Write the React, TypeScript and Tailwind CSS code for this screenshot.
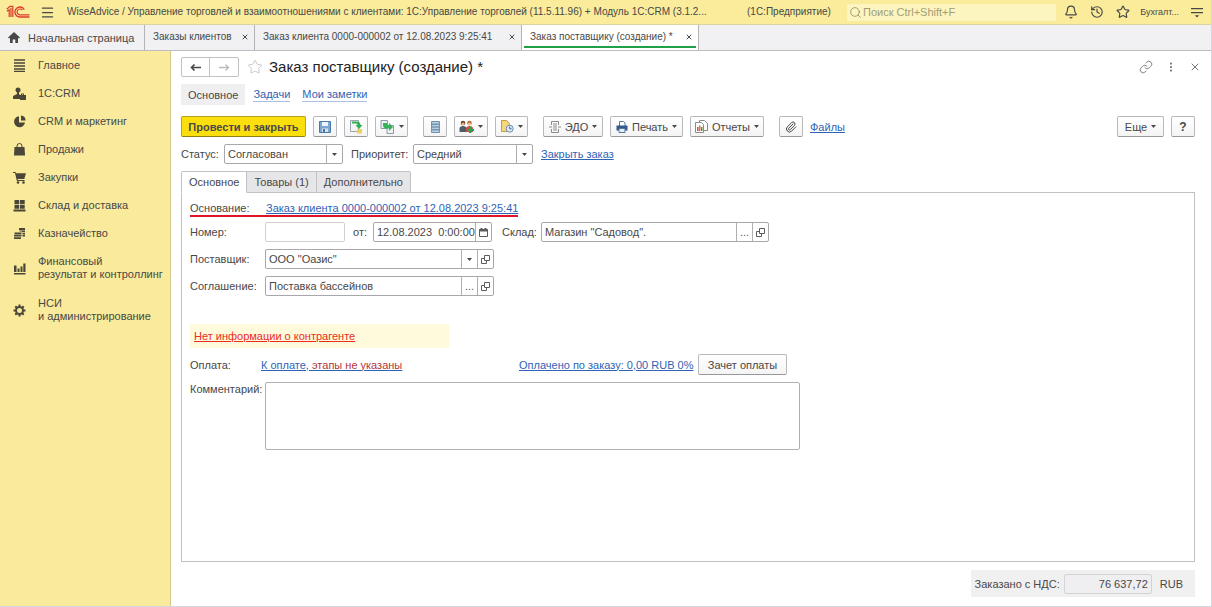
import { useState, type ReactNode } from 'react'
import { clsx } from 'clsx'
import { Bell, History, Link, Menu, MoreVertical, Paperclip, Search, Star, X } from 'lucide-react'

type SectionItem = {
    label: string[]
    icon: ReactNode
}

const sections: SectionItem[] = [
    {
        label: ['Главное'],
        icon: <path d="M1 1h11M1 4h11M1 7h11M1 10h11M1 12.5h11" stroke="currentColor" strokeWidth="1.6" fill="none" />,
    },
    {
        label: ['1С:CRM'],
        icon: (
            <>
                <circle cx="5" cy="3" r="2.5" />
                <path d="M4 5h2v2l1 1v4H0V9l4-2z" />
                <path d="M8 8h5v5H7V8h1V6.5h3V8h-1v-.7H9V8z" />
            </>
        ),
    },
    {
        label: ['CRM и маркетинг'],
        icon: <path d="M6 1.2a5.5 5.5 0 1 0 6 6.3H6zM8 .5V5.6h4.6A5.3 5.3 0 0 0 8 .5z" />,
    },
    {
        label: ['Продажи'],
        icon: (
            <>
                <path d="M1.5 4h10l.5 8.5H1z" />
                <path d="M4 5V3a2.5 2.5 0 0 1 5 0V5" fill="none" stroke="currentColor" />
            </>
        ),
    },
    {
        label: ['Закупки'],
        icon: (
            <>
                <path d="M0 1h2.5l.5 1.3h10L11.3 8H4.6l.2 1h6.7v1H3.9L2 2H0z" />
                <circle cx="5" cy="11.5" r="1.3" />
                <circle cx="10.5" cy="11.5" r="1.3" />
            </>
        ),
    },
    {
        label: ['Склад и доставка'],
        icon: <path d="M1.5 1h4.7v4H1.5zM7 1h4.7v4H7zM1.5 5.7h4.7v4H1.5zM7 5.7h4.7v4H7zM.5 10.5h12v2H.5z" />,
    },
    {
        label: ['Казначейство'],
        icon: (
            <>
                <path d="M6 1h6v2H6zM6.5 3.5H12v1.800H9V4.5H6.5zM9.5 6H12v1.5H9.5zM9.5 8H12v1.5h-2.5z" />
                <path d="M1.5 5.5H8.5v2H1.5zM1 8h7.5v1.6H1zM1 10.2h7v1.8H1z" />
            </>
        ),
    },
    {
        label: ['Финансовый', 'результат и контроллинг'],
        icon: <path d="M1 3.500h2.500v6.500H1zM4.500 6.500h2v3.500h-2zM7.500 4.500h2V10h-2zM10.300 1.500h2.200V10h-2.200zM1 11h11.500v1.500H1z" />,
    },
    {
        label: ['НСИ', 'и администрирование'],
        icon: (
            <>
                <circle cx="6.5" cy="6.5" r="3.5" fill="none" stroke="currentColor" strokeWidth="2" />
                <path
                    d="M6.5 0.5v2M6.5 10.5v2M.5 6.5h2M10.5 6.5h2M2.3 2.3l1.4 1.4M9.3 9.3l1.4 1.4M2.3 10.7l1.4-1.4M9.3 3.7l1.4-1.4"
                    stroke="currentColor"
                    strokeWidth="2"
                />
            </>
        ),
    },
]

const windows = [
    { title: 'Заказы клиентов', width: 'w-[110px]' },
    { title: 'Заказ клиента 0000-000002 от 12.08.2023 9:25:41', width: 'w-[267px]' },
    { title: 'Заказ поставщику (создание) *', width: 'w-[177px]', active: true },
]

const formTabs = ['Основное', 'Товары (1)', 'Дополнительно']

function Logo() {
    return (
        <svg viewBox="0 0 24 14" className="w-6 h-3.5 shrink-0 text-[#dc3a2c]" fill="none" stroke="currentColor" aria-label="1С">
            <path d="M.7 4.2 4 1.3h2.8V12M.9 6.3l2.3-1.5V12M5 3v9" strokeWidth="1.2" />
            <path d="M18.3 4.6A5 5 0 1 0 13.7 12H23.5" strokeWidth="1.3" />
            <path d="M16.3 5.2A2.9 2.9 0 1 0 13.7 9.8H23.5" strokeWidth="1.2" />
        </svg>
    )
}

function Caret() {
    return (
        <svg viewBox="0 0 5 3" className="w-[5px] h-[3px] shrink-0" fill="currentColor">
            <path d="M0 0h5L2.5 3z" />
        </svg>
    )
}

function OpenIcon() {
    return (
        <svg viewBox="0 0 9 9" className="w-[9px] h-[9px]" fill="none" stroke="currentColor">
            <path d="M3.5.5h5v5h-5zM3.5 3.5h-3v5h5v-3" />
        </svg>
    )
}

function ToolButton({ label, children, caret, className }: { label?: string; children?: ReactNode; caret?: boolean; className?: string }) {
    return (
        <button
            aria-label={label}
            title={label}
            className={clsx(
                'h-[21px] shrink-0 flex items-center justify-center gap-1 rounded-xs border border-[#b9b9bd] border-b-[#98989c] bg-gradient-to-b from-white to-[#f4f4f4] hover:to-[#e8e8e8] whitespace-nowrap',
                className
            )}
        >
            {children}
            {caret && <Caret />}
        </button>
    )
}

function SideButton({ label, children }: { label: string; children: ReactNode }) {
    return (
        <button aria-label={label} className="w-4 shrink-0 flex items-center justify-center border-l border-[#b0b0b4] text-[#5c5c5c]">
            {children}
        </button>
    )
}

const fieldBox = 'h-5 flex rounded-xs border bg-white overflow-hidden'

function SelectField({ id, value, className, children }: { id: string; value: string; className: string; children?: ReactNode }) {
    return (
        <div className={clsx(fieldBox, 'border-[#a8a8ac]', className)}>
            <div className="relative flex-1 min-w-0 flex">
                <select id={id} defaultValue={value} className="w-full appearance-none bg-transparent pl-[3px] pr-5 outline-none">
                    <option>{value}</option>
                </select>
                <span className="absolute inset-y-0 right-0 w-4 flex items-center justify-center border-l border-[#b0b0b4] pointer-events-none">
                    <Caret />
                </span>
            </div>
            {children}
        </div>
    )
}

function TextField({ id, value, muted, className, children }: { id: string; value: string; muted?: boolean; className: string; children?: ReactNode }) {
    return (
        <div className={clsx(fieldBox, muted ? 'border-[#d0d0d2]' : 'border-[#a8a8ac]', className)}>
            <input id={id} defaultValue={value} className="flex-1 min-w-0 pl-[3px] outline-none" />
            {children}
        </div>
    )
}

function TopBar() {
    return (
        <header className="h-[25px] shrink-0 flex items-center bg-[#faec9a] border-b border-[#ddd3a0] pl-1.5 pr-2">
            <Logo />
            <button aria-label="Меню" className="ml-2.5 mr-3">
                <Menu className="w-[15px] h-[15px]" strokeWidth={2} />
            </button>
            <span className="w-[680px] text-[10px] truncate">
                WiseAdvice / Управление торговлей и взаимоотношениями с клиентами: 1С:Управление торговлей (11.5.11.96) + Модуль 1С:CRM (3.1.2...
            </span>
            <span className="shrink-0 w-[100px] text-[10px]">(1С:Предприятие)</span>
            <label className="w-[209px] shrink-0 h-[17px] flex items-center gap-px bg-[#fdf5c0] pl-0.5 text-[#8f885f]">
                <Search className="w-[13px] h-[13px] shrink-0" strokeWidth={1.5} />
                <input aria-label="Поиск" placeholder="Поиск Ctrl+Shift+F" className="flex-1 min-w-0 outline-none placeholder:text-[#a39c74]" />
            </label>
            <div className="ml-auto flex items-center gap-3">
                <button aria-label="Оповещения">
                    <Bell className="w-3.5 h-3.5" strokeWidth={2} />
                </button>
                <button aria-label="История">
                    <History className="w-3.5 h-3.5" strokeWidth={2} />
                </button>
                <button aria-label="Избранное">
                    <Star className="w-3.5 h-3.5" strokeWidth={2} />
                </button>
            </div>
            <button className="ml-2.5 text-[9px]">Бухгалт...</button>
            <button aria-label="Настройки" className="ml-3">
                <svg viewBox="0 0 12 11" className="w-3 h-[11px]" fill="currentColor">
                    <path d="M0 1h12v1.3H0zM0 5h12v1.3H0zM3.8 8.2h4.4L6 10.6z" />
                </svg>
            </button>
        </header>
    )
}

function WindowTabs() {
    return (
        <nav className="h-[26px] shrink-0 flex bg-[#f1f1f3] border-b border-[#bdbdc1]">
            <button className="w-[145px] shrink-0 flex items-center gap-2 pl-2 border-r border-[#b4b4b8]">
                <svg viewBox="0 0 12 11" className="w-3 h-[11px]" fill="currentColor">
                    <path d="M6 0l6 5.5-1 1L10 5.7V11H7.3V7.5H4.7V11H2V5.7l-1 .8-1-1z" />
                </svg>
                Начальная страница
            </button>
            {windows.map((w) => (
                <div key={w.title} className={clsx('shrink-0 flex border-r border-[#b4b4b8] px-0.5 pb-0.5', w.width, w.active && 'bg-white')}>
                    <div
                        className={clsx(
                            'flex-1 flex items-center justify-between pl-1.5 pt-0.5 border-b-2 text-[10px] whitespace-nowrap',
                            w.active ? 'border-[#22a047]' : 'border-transparent'
                        )}
                    >
                        <button>{w.title}</button>
                        <button aria-label="Закрыть вкладку" className="pr-[3px]">
                            <X className="w-2 h-2" strokeWidth={3} />
                        </button>
                    </div>
                </div>
            ))}
        </nav>
    )
}

function Sidebar() {
    return (
        <aside className="w-[171px] shrink-0 bg-[#f9eb9b] border-r border-[#d6c78e]">
            {sections.map((s) => (
                <a
                    key={s.label[0]}
                    href="#"
                    className={clsx('flex items-center gap-3 pl-[13px] leading-[13px] hover:bg-[#f3e186]', s.label.length > 1 ? 'h-[42px]' : 'h-7')}
                >
                    <svg viewBox="0 0 13 13" className="w-[13px] h-[13px] shrink-0 text-[#4a4638]" fill="currentColor">
                        {s.icon}
                    </svg>
                    <span>
                        {s.label.map((line) => (
                            <span key={line} className="block whitespace-nowrap">
                                {line}
                            </span>
                        ))}
                    </span>
                </a>
            ))}
        </aside>
    )
}

function Toolbar() {
    return (
        <div className="flex items-center gap-[7px] mt-[11px]">
            <button className="w-[125px] h-[21px] rounded-xs border border-[#b8a320] border-b-[#8f7e10] bg-[#fbdf0c] font-bold whitespace-nowrap hover:bg-[#f2d500]">
                Провести и закрыть
            </button>
            <ToolButton label="Записать" className="w-6">
                <svg viewBox="0 0 12 12" className="w-3 h-3">
                    <path d="M.5.5h11v11h-11z" fill="#7fa6cf" stroke="#4a78a8" />
                    <path d="M3 1h6v4H3z" fill="#eef4fa" />
                    <path d="M3 7.5h6V11H3z" fill="#d5e2ee" />
                    <path d="M4 8h2v3H4z" fill="#4a78a8" />
                </svg>
            </ToolButton>
            <ToolButton label="Провести" className="w-6">
                <svg viewBox="0 0 14 14" className="w-3.5 h-3.5">
                    <path d="M1.5.5h8v11h-8z" fill="#f4f4f4" stroke="#9aa4ad" />
                    <path d="M8 9h5v4.5H8z" fill="#efd25c" />
                    <path d="M3 1.5h5c2 0 3.5 1.5 3.5 3.5H13.5L10 9 6.5 5H8.5C8.5 4 8 3.5 7 3.5H3z" fill="#2fae54" />
                </svg>
            </ToolButton>
            <ToolButton label="Создать на основании" caret className="w-[33px]">
                <svg viewBox="0 0 15 14" className="w-[15px] h-3.5">
                    <path d="M1 .5h6.5v8H1zM7 5.5h6.5v8H7z" fill="#eef2f4" stroke="#8d9ba6" />
                    <path d="M3 3h4v2h2V2.8L13 7 9 11V8.5H6C4 8.5 3 7 3 5z" fill="#35b25a" />
                </svg>
            </ToolButton>
            <ToolButton label="Структура подчиненности" className="w-6 ml-2">
                <svg viewBox="0 0 9 12" className="w-[9px] h-3">
                    <path d="M.5.5h8v11h-8z" fill="#b8cede" stroke="#6f93b0" />
                    <path d="M1 3.2h7M1 6h7M1 8.8h7" stroke="#587f9f" />
                </svg>
            </ToolButton>
            <ToolButton label="Взаимодействия" caret className="w-[34px]">
                <svg viewBox="0 0 15 13" className="w-[15px] h-[13px]">
                    <circle cx="4" cy="3" r="2.3" fill="#6a4a2c" />
                    <circle cx="10.5" cy="3" r="2.3" fill="#b06a34" />
                    <circle cx="4" cy="4" r="1.5" fill="#e9b98c" />
                    <circle cx="10.5" cy="4" r="1.5" fill="#f0c59c" />
                    <path d="M.5 12V8.5C.5 7 2 6 4 6s3.5 1 3.5 2.5V12z" fill="#4f5b68" />
                    <path d="M7 12V8.5C7 7 8.5 6 10.5 6S14 7 14 8.5V12z" fill="#c94e3c" />
                    <path d="M10 6.5h2.5V9H15v2h-2.5v2H10v-2H8V9h2z" fill="#2ca351" />
                </svg>
            </ToolButton>
            <ToolButton label="Напоминания" caret className="w-[33px]">
                <svg viewBox="0 0 14 13" className="w-3.5 h-[13px]">
                    <path d="M1.5.5h5l3 3v8h-8z" fill="#f5d77e" stroke="#c49b3e" />
                    <circle cx="9.7" cy="8.7" r="3.5" fill="#dce8f4" stroke="#6d8db5" />
                    <path d="M9.7 6.5v2.3h2" fill="none" stroke="#4a6c98" />
                </svg>
            </ToolButton>
            <ToolButton caret className="w-[60px] ml-2">
                <svg viewBox="0 0 12 12" className="w-3 h-3 shrink-0" fill="none" stroke="#8b8b8b">
                    <path d="M2.5 4V.5h7V4M2.5 8v3.5h7V8M4 3h4M4 5h4M4 7h4M4 9h4M0 6h3M9 6h3" />
                </svg>
                ЭДО
            </ToolButton>
            <ToolButton caret className="w-[73px]">
                <svg viewBox="0 0 12 12" className="w-3 h-3 shrink-0">
                    <path d="M3.5 5V.5h4l1.5 1.5V5" fill="#fff" stroke="#54779f" />
                    <path d="M.5 4.5h11v5H.5z" fill="#33598a" />
                    <path d="M3 7.5h6v4H3z" fill="#e7eef6" stroke="#54779f" />
                </svg>
                Печать
            </ToolButton>
            <ToolButton caret className="w-[74px]">
                <svg viewBox="0 0 13 13" className="w-[13px] h-[13px] shrink-0">
                    <path d="M4.5.5h5l3 3v7h-8z" fill="#fff" stroke="#8a8a8a" />
                    <path d="M.5 2.5h6l2 2v8h-8z" fill="#fff" stroke="#8a8a8a" />
                    <path d="M2 7h1.5v4H2z" fill="#d8453a" />
                    <path d="M4 5.5h1.5V11H4z" fill="#e0702e" />
                    <path d="M6 7h1.5v4H6z" fill="#3c9a56" />
                </svg>
                Отчеты
            </ToolButton>
            <ToolButton label="Присоединенные файлы" className="w-6 ml-2">
                <Paperclip className="w-3 h-3" strokeWidth={2} />
            </ToolButton>
            <a href="#" className="text-[#2f63b5] underline">
                Файлы
            </a>
            <ToolButton caret className="w-[47px] ml-auto">
                Еще
            </ToolButton>
            <ToolButton label="Справка" className="w-6">
                <span className="font-bold text-xs">?</span>
            </ToolButton>
        </div>
    )
}

function OrderForm() {
    return (
        <div className="flex-1 border border-[#c2c2c6] pl-2 pt-2 -mt-px">
            <div className="w-fit h-4 flex items-center border-b-2 border-[#df1426] whitespace-nowrap">
                <span className="w-[76px] shrink-0">Основание:</span>
                <a href="#" className="text-[#2f63b5] underline">
                    Заказ клиента 0000-000002 от 12.08.2023 9:25:41
                </a>
            </div>

            <div className="flex items-center mt-[5px] whitespace-nowrap">
                <label htmlFor="number" className="w-[75px] shrink-0">Номер:</label>
                <TextField id="number" value="" muted className="w-20" />
                <label htmlFor="date" className="w-7 shrink-0 pl-2">от:</label>
                <TextField id="date" value="12.08.2023  0:00:00" className="w-[119px]">
                    <SideButton label="Календарь">
                        <svg viewBox="0 0 9 9" className="w-[9px] h-[9px]" fill="none" stroke="currentColor">
                            <path d="M.5 1.5h8v7h-8z" />
                            <path d="M0 2.5h9M2.5 0v2M6.5 0v2" strokeWidth="2" />
                        </svg>
                    </SideButton>
                </TextField>
                <label htmlFor="store" className="w-[49px] shrink-0 pl-2.5">Склад:</label>
                <TextField id="store" value='Магазин "Садовод".' className="w-[228px]">
                    <SideButton label="Выбрать склад">...</SideButton>
                    <SideButton label="Открыть склад"><OpenIcon /></SideButton>
                </TextField>
            </div>

            <div className="flex items-center mt-[7px]">
                <label htmlFor="supplier" className="w-[75px] shrink-0">Поставщик:</label>
                <SelectField id="supplier" value='ООО "Оазис"' className="w-[229px]">
                    <SideButton label="Открыть поставщика"><OpenIcon /></SideButton>
                </SelectField>
            </div>

            <div className="flex items-center mt-[7px]">
                <label htmlFor="agreement" className="w-[75px] shrink-0">Соглашение:</label>
                <TextField id="agreement" value="Поставка бассейнов" className="w-[229px]">
                    <SideButton label="Выбрать соглашение">...</SideButton>
                    <SideButton label="Открыть соглашение"><OpenIcon /></SideButton>
                </TextField>
            </div>

            <div className="w-[259px] h-6 mt-7 pl-1 flex items-center bg-[#fffadb]">
                <a href="#" className="text-[#ec2b1c] underline">
                    Нет информации о контрагенте
                </a>
            </div>

            <div className="flex items-center mt-1.5 whitespace-nowrap">
                <span className="w-[71px] shrink-0">Оплата:</span>
                <a href="#" className="w-[258px] text-[#2f63b5] underline">
                    К оплате, <span className="text-[#b5343c]">этапы не указаны</span>
                </a>
                <a href="#" className="w-[179px] text-[#2f63b5] underline">
                    Оплачено по заказу: 0,00 RUB 0%
                </a>
                <ToolButton className="w-[89px]">Зачет оплаты</ToolButton>
            </div>

            <div className="flex mt-[7px]">
                <label htmlFor="comment" className="w-[75px] shrink-0 whitespace-nowrap">Комментарий:</label>
                <textarea id="comment" className="w-[535px] h-[68px] rounded-xs border border-[#b0b0b4] resize-none outline-none" />
            </div>
        </div>
    )
}

export default function App() {
    const [tab, setTab] = useState('Основное')

    return (
        <div className="min-h-screen flex flex-col bg-white border-r border-b border-[#cfd8da] text-[11px] leading-[14px] text-[#484848] font-['Liberation_Sans',Arial,sans-serif]">
            <TopBar />
            <WindowTabs />
            <div className="flex-1 flex">
                <Sidebar />
                <main className="flex-1 min-w-0 flex flex-col pl-2.5 pr-4 pt-1.5 pb-[9px]">
                    <div className="flex items-center">
                        <div className="h-5 flex rounded-xs border border-[#c2c2c6]">
                            <button aria-label="Назад" className="w-7 flex items-center justify-center border-r border-[#c2c2c6]">
                                <svg viewBox="0 0 11 7" className="w-[11px] h-[7px]" fill="none" stroke="currentColor" strokeWidth="1.6">
                                    <path d="M11 3.5H1.5M4.5.5l-3 3 3 3" />
                                </svg>
                            </button>
                            <button aria-label="Вперед" className="w-7 flex items-center justify-center text-[#bcbcbc]">
                                <svg viewBox="0 0 11 7" className="w-[11px] h-[7px]" fill="none" stroke="currentColor" strokeWidth="1.4">
                                    <path d="M0 3.5h9.5M6.5.5l3 3-3 3" />
                                </svg>
                            </button>
                        </div>
                        <button aria-label="В избранное" className="ml-2 mr-1.5 text-[#c9c9cd]">
                            <Star className="w-4 h-4" strokeWidth={1.5} />
                        </button>
                        <h1 className="text-[15px] leading-5 text-[#222222]">Заказ поставщику (создание) *</h1>
                        <div className="ml-auto -mr-1.5 flex items-center gap-3 text-[#77777d]">
                            <button aria-label="Ссылка"><Link className="w-3.5 h-3.5" strokeWidth={1.5} /></button>
                            <button aria-label="Еще действия"><MoreVertical className="w-3 h-3" strokeWidth={2.5} /></button>
                            <button aria-label="Закрыть"><X className="w-3 h-3" strokeWidth={2} /></button>
                        </div>
                    </div>

                    <nav className="flex items-center mt-[7px] h-[21px]">
                        <a href="#" className="h-full flex items-center px-[7px] bg-[#efeff1]">Основное</a>
                        <a href="#" className="ml-2 text-[#2f63b5] border-b border-[#a9c0e2]">Задачи</a>
                        <a href="#" className="ml-3 text-[#2f63b5] border-b border-[#a9c0e2]">Мои заметки</a>
                    </nav>

                    <Toolbar />

                    <div className="flex items-center mt-[7px]">
                        <label htmlFor="status" className="w-[43px] shrink-0">Статус:</label>
                        <SelectField id="status" value="Согласован" className="w-[119px]" />
                        <label htmlFor="priority" className="w-[70px] shrink-0 pl-2">Приоритет:</label>
                        <SelectField id="priority" value="Средний" className="w-[120px]" />
                        <a href="#" className="ml-2 text-[#2f63b5] underline">Закрыть заказ</a>
                    </div>

                    <div role="tablist" className="flex mt-[7px]">
                        {formTabs.map((t) => (
                            <button
                                key={t}
                                role="tab"
                                aria-selected={t === tab}
                                onClick={() => setTab(t)}
                                className={clsx(
                                    'relative h-[22px] px-[7px] border border-[#c2c2c6] not-first:border-l-0 first:rounded-tl-xs last:rounded-tr-xs',
                                    t === tab ? 'bg-white border-b-white' : 'bg-[#e6e6e8]'
                                )}
                            >
                                {t}
                            </button>
                        ))}
                    </div>
                    <OrderForm />

                    <div className="self-end mt-2 h-[27px] flex items-center bg-[#f1f0f1] pl-1 pr-3">
                        <label htmlFor="total" className="mr-1">Заказано с НДС:</label>
                        <input
                            id="total"
                            readOnly
                            value="76 637,72"
                            className="w-[88px] h-5 px-[3px] text-right rounded-xs border border-[#d3d3d5] bg-[#efeef0] outline-none"
                        />
                        <span className="ml-2">RUB</span>
                    </div>
                </main>
            </div>
        </div>
    )
}
